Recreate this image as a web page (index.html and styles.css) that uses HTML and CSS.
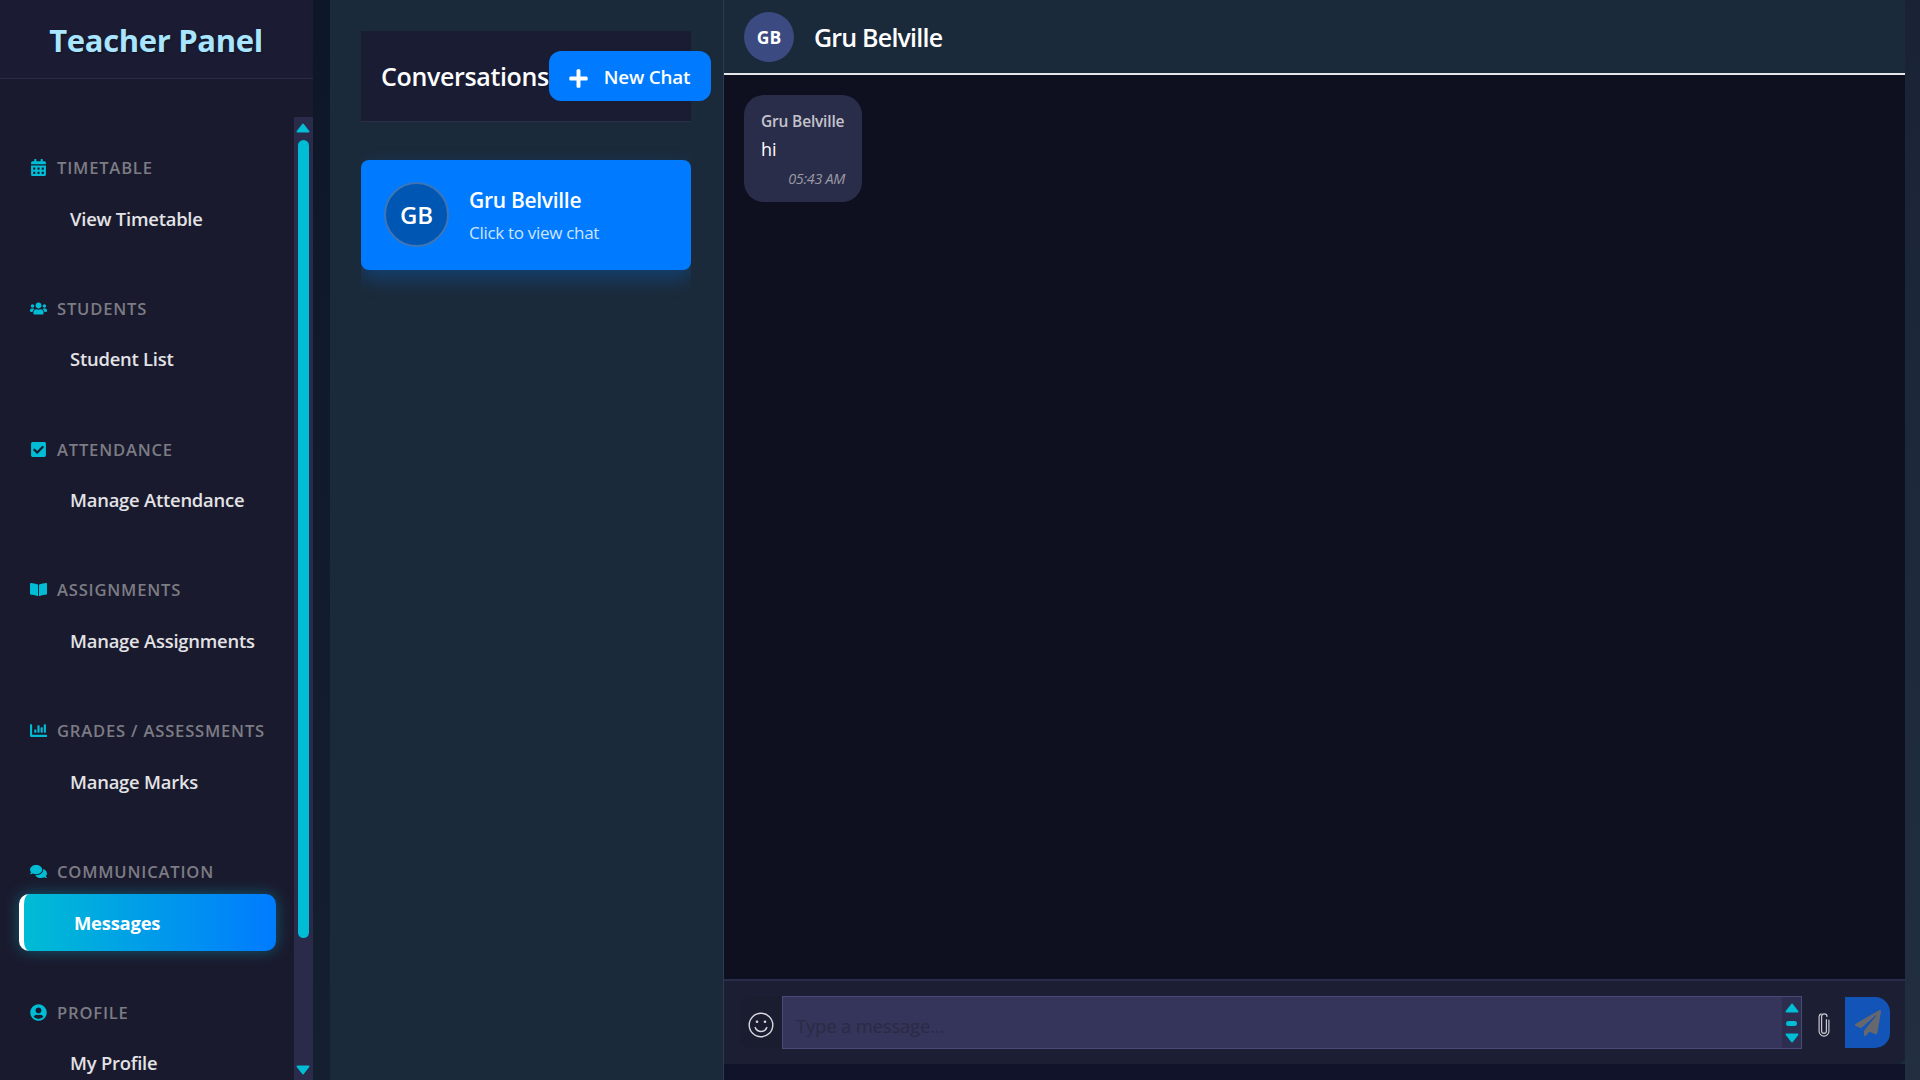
FILE: index.html
```html
<!DOCTYPE html>
<html lang="en">
<head>
    <meta charset="UTF-8">
    <meta name="viewport" content="width=device-width, initial-scale=1.0">
    <title>Teacher Panel - Messages</title>
    <link rel="stylesheet" href="styles.css">
</head>
<body>

<aside class="sidebar">
    <div class="sidebar-header">
        <h1 class="sidebar-title">Teacher Panel</h1>
    </div>
    <div class="sidebar-body">
        <nav class="nav">
            <section class="nav-section">
                <h2 class="nav-heading">
                    <svg class="nav-icon" viewBox="0 0 448 512"><path d="M0 464c0 26.5 21.5 48 48 48h352c26.5 0 48-21.5 48-48V192H0v272zm320-196c0-6.6 5.4-12 12-12h40c6.6 0 12 5.4 12 12v40c0 6.6-5.4 12-12 12h-40c-6.6 0-12-5.4-12-12v-40zm0 128c0-6.6 5.4-12 12-12h40c6.6 0 12 5.4 12 12v40c0 6.6-5.4 12-12 12h-40c-6.6 0-12-5.4-12-12v-40zM192 268c0-6.6 5.4-12 12-12h40c6.6 0 12 5.4 12 12v40c0 6.6-5.4 12-12 12h-40c-6.6 0-12-5.4-12-12v-40zm0 128c0-6.6 5.4-12 12-12h40c6.6 0 12 5.4 12 12v40c0 6.6-5.4 12-12 12h-40c-6.6 0-12-5.4-12-12v-40zM64 268c0-6.6 5.4-12 12-12h40c6.6 0 12 5.4 12 12v40c0 6.6-5.4 12-12 12H76c-6.6 0-12-5.4-12-12v-40zm0 128c0-6.6 5.4-12 12-12h40c6.6 0 12 5.4 12 12v40c0 6.6-5.4 12-12 12H76c-6.6 0-12-5.4-12-12v-40zM400 64h-48V16c0-8.8-7.2-16-16-16h-32c-8.8 0-16 7.2-16 16v48H160V16c0-8.8-7.2-16-16-16h-32c-8.8 0-16 7.2-16 16v48H48C21.5 64 0 85.5 0 112v48h448v-48c0-26.5-21.5-48-48-48z"/></svg>
                    Timetable
                </h2>
                <a class="nav-link">View Timetable</a>
            </section>
            <section class="nav-section">
                <h2 class="nav-heading">
                    <svg class="nav-icon" viewBox="0 0 640 512"><path d="M96 224c35.3 0 64-28.7 64-64s-28.7-64-64-64-64 28.7-64 64 28.7 64 64 64zm448 0c35.3 0 64-28.7 64-64s-28.7-64-64-64-64 28.7-64 64 28.7 64 64 64zm32 32h-64c-17.6 0-33.5 7.1-45.1 18.6 40.3 22.1 68.9 62 75.1 109.4h66c17.7 0 32-14.3 32-32v-32c0-35.3-28.7-64-64-64zm-256 0c61.9 0 112-50.1 112-112S381.9 32 320 32 208 82.1 208 144s50.1 112 112 112zm76.8 32h-8.3c-20.8 10-43.9 16-68.5 16s-47.6-6-68.5-16h-8.3C179.6 288 128 339.6 128 403.2V432c0 26.5 21.5 48 48 48h288c26.5 0 48-21.5 48-48v-28.8c0-63.6-51.6-115.2-115.2-115.2zm-223.7-13.4C161.5 263.1 145.6 256 128 256H64c-35.3 0-64 28.7-64 64v32c0 17.7 14.3 32 32 32h65.9c6.3-47.4 34.9-87.3 75.2-109.4z"/></svg>
                    Students
                </h2>
                <a class="nav-link">Student List</a>
            </section>
            <section class="nav-section">
                <h2 class="nav-heading">
                    <svg class="nav-icon" viewBox="0 0 448 512"><path d="M400 480H48c-26.51 0-48-21.49-48-48V80c0-26.51 21.49-48 48-48h352c26.51 0 48 21.49 48 48v352c0 26.51-21.49 48-48 48zm-204.686-98.059l184-184c6.248-6.248 6.248-16.379 0-22.627l-22.627-22.627c-6.248-6.248-16.379-6.249-22.628 0L184 302.745l-70.059-70.059c-6.248-6.248-16.379-6.248-22.628 0l-22.627 22.627c-6.248 6.248-6.248 16.379 0 22.627l104 104c6.249 6.25 16.379 6.25 22.628.001z"/></svg>
                    Attendance
                </h2>
                <a class="nav-link">Manage Attendance</a>
            </section>
            <section class="nav-section">
                <h2 class="nav-heading">
                    <svg class="nav-icon" viewBox="0 0 576 512"><path d="M542.22 32.05c-54.8 3.11-163.72 14.43-230.96 55.59-4.64 2.84-7.27 7.89-7.27 13.17v363.87c0 11.55 12.63 18.85 23.28 13.49 69.18-34.82 169.23-44.32 218.7-46.92 16.89-.89 30.02-14.43 30.02-30.66V62.75c.01-17.71-15.35-31.74-33.77-30.7zM264.73 87.64C197.5 46.48 88.58 35.17 33.78 32.05 15.36 31.01 0 45.04 0 62.75V400.6c0 16.24 13.13 29.78 30.02 30.66 49.49 2.6 149.59 12.11 218.77 46.95 10.62 5.35 23.21-1.94 23.21-13.46V100.63c0-5.29-2.62-10.14-7.27-12.99z"/></svg>
                    Assignments
                </h2>
                <a class="nav-link">Manage Assignments</a>
            </section>
            <section class="nav-section">
                <h2 class="nav-heading">
                    <svg class="nav-icon" viewBox="0 0 512 512"><path d="M332.8 320h38.4c6.4 0 12.8-6.4 12.8-12.8V172.8c0-6.4-6.4-12.8-12.8-12.8h-38.4c-6.4 0-12.8 6.4-12.8 12.8v134.4c0 6.4 6.4 12.8 12.8 12.8zm96 0h38.4c6.4 0 12.8-6.4 12.8-12.8V76.8c0-6.4-6.4-12.8-12.8-12.8h-38.4c-6.4 0-12.8 6.4-12.8 12.8v230.4c0 6.4 6.4 12.8 12.8 12.8zm-288 0h38.4c6.4 0 12.8-6.4 12.8-12.8v-70.4c0-6.4-6.4-12.8-12.8-12.8h-38.4c-6.4 0-12.8 6.4-12.8 12.8v70.4c0 6.4 6.4 12.8 12.8 12.8zm96 0h38.4c6.4 0 12.8-6.4 12.8-12.8V108.8c0-6.4-6.4-12.8-12.8-12.8h-38.4c-6.4 0-12.8 6.4-12.8 12.8v198.4c0 6.4 6.4 12.8 12.8 12.8zM496 384H64V80c0-8.84-7.16-16-16-16H16C7.16 64 0 71.16 0 80v336c0 17.67 14.33 32 32 32h464c8.84 0 16-7.16 16-16v-32c0-8.84-7.16-16-16-16z"/></svg>
                    Grades / Assessments
                </h2>
                <a class="nav-link">Manage Marks</a>
            </section>
            <section class="nav-section">
                <h2 class="nav-heading">
                    <svg class="nav-icon" viewBox="0 0 576 512"><path d="M416 192c0-88.4-93.1-160-208-160S0 103.6 0 192c0 34.3 14.1 65.9 38 92-13.4 30.2-35.5 54.2-35.8 54.5-2.2 2.3-2.8 5.7-1.5 8.7S4.8 352 8 352c36.6 0 66.9-12.3 88.7-25 32.2 15.7 70.3 25 111.3 25 114.9 0 208-71.6 208-160zm122 220c23.9-26 38-57.7 38-92 0-66.9-53.5-124.2-129.3-148.1.9 6.6 1.3 13.3 1.3 20.1 0 105.9-107.7 192-240 192-10.8 0-21.3-.8-31.7-1.9C207.8 439.6 281.8 480 368 480c41 0 79.1-9.2 111.3-25 21.8 12.7 52.1 25 88.7 25 3.2 0 6.1-1.9 7.3-4.8 1.3-2.9.7-6.3-1.5-8.7-.3-.3-22.4-24.2-35.8-54.5z"/></svg>
                    Communication
                </h2>
                <a class="nav-link active">Messages</a>
            </section>
            <section class="nav-section">
                <h2 class="nav-heading">
                    <svg class="nav-icon" viewBox="0 0 496 512"><path d="M248 8C111 8 0 119 0 256s111 248 248 248 248-111 248-248S385 8 248 8zm0 96c48.6 0 88 39.4 88 88s-39.4 88-88 88-88-39.4-88-88 39.4-88 88-88zm0 344c-58.7 0-111.3-26.6-146.5-68.2 18.8-35.4 55.6-59.8 98.5-59.8 2.4 0 4.8.4 7.1 1.1 13 4.2 26.6 6.9 40.9 6.9 14.3 0 28-2.7 40.9-6.9 2.3-.7 4.7-1.1 7.1-1.1 42.9 0 79.7 24.4 98.5 59.8C359.3 421.4 306.7 448 248 448z"/></svg>
                    Profile
                </h2>
                <a class="nav-link">My Profile</a>
            </section>
        </nav>
        <div class="fake-scroll">
            <svg class="arrow" viewBox="0 0 14 10"><path d="M7 1.5L12.5 8.5H1.5Z"/></svg>
            <span class="fake-thumb"></span>
            <svg class="arrow" viewBox="0 0 14 10"><path d="M7 8.5L12.5 1.5H1.5Z"/></svg>
        </div>
    </div>
</aside>

<div class="gutter"></div>

<section class="convo-panel">
    <div class="convo-header">
        <h2 class="convo-title">Conversations</h2>
        <button class="new-chat" type="button">
            <svg class="plus-icon" viewBox="0 0 448 512"><path d="M416 208H272V64c0-17.67-14.33-32-32-32h-32c-17.67 0-32 14.33-32 32v144H32c-17.67 0-32 14.33-32 32v32c0 17.67 14.33 32 32 32h144v144c0 17.67 14.33 32 32 32h32c17.67 0 32-14.33 32-32V304h144c17.67 0 32-14.33 32-32v-32c0-17.67-14.33-32-32-32z"/></svg>
            New Chat
        </button>
    </div>
    <div class="convo-list">
        <div class="convo-card">
            <div class="convo-avatar">GB</div>
            <div class="convo-info">
                <div class="convo-name">Gru Belville</div>
                <div class="convo-sub">Click to view chat</div>
            </div>
        </div>
    </div>
</section>

<main class="chat">
    <header class="chat-header">
        <div class="chat-avatar">GB</div>
        <div class="chat-name">Gru Belville</div>
    </header>
    <div class="chat-messages">
        <div class="bubble">
            <div class="bubble-sender">Gru Belville</div>
            <div class="bubble-text">hi</div>
            <div class="bubble-time">05:43 AM</div>
        </div>
    </div>
    <form class="chat-input">
        <button class="emoji-btn" type="button">
            <svg class="emoji-icon" viewBox="0 0 26 26" fill="none" stroke="currentColor" stroke-width="1.4" stroke-linecap="round">
                <circle cx="13" cy="13" r="11.8"/>
                <path d="M7.2 15.6c1.2 2.6 3.3 3.9 5.8 3.9s4.6-1.3 5.8-3.9"/>
                <circle cx="9" cy="9.8" r="1.3" fill="currentColor" stroke="none"/>
                <circle cx="17" cy="9.8" r="1.3" fill="currentColor" stroke="none"/>
            </svg>
        </button>
        <div class="input-box">
            <input class="message-input" type="text" placeholder="Type a message...">
            <div class="input-scroll">
                <svg class="arrow" viewBox="0 0 14 10"><path d="M7 1.5L12.5 8.5H1.5Z"/></svg>
                <span class="input-thumb"></span>
                <svg class="arrow" viewBox="0 0 14 10"><path d="M7 8.5L12.5 1.5H1.5Z"/></svg>
            </div>
        </div>
        <button class="attach-btn" type="button">
            <svg class="clip-icon" viewBox="0 0 12 24" fill="none" stroke="currentColor" stroke-width="1.2" stroke-linecap="round">
                <path d="M8.4 6.5v11.4a2.4 2.4 0 0 1-4.8 0V3.6a2.7 2.7 0 0 1 5.4 0"/>
                <path d="M10.9 7v11.2a4.9 4.9 0 0 1-9.8 0V3.8a3.2 3.2 0 0 1 2-2.9"/>
            </svg>
        </button>
        <button class="send-btn" type="button">
            <svg class="send-icon" viewBox="0 0 512 512"><path d="M476 3.2L12.5 270.6c-18.1 10.4-15.8 35.6 2.2 43.2L121 358.4l287.3-253.2c5.5-4.9 13.3 2.6 8.6 8.3L176 407v80.5c0 23.6 28.5 32.9 42.5 15.8L282 426l124.6 52.2c14.2 6 30.4-2.9 33-18.2l72-432C515 7.8 493.3-6.8 476 3.2z"/></svg>
        </button>
    </form>
    <div class="chat-foot"></div>
</main>

<div class="edge"></div>

</body>
</html>
```

FILE: styles.css
```css
* {
    box-sizing: border-box;
}

body {
    font-family: 'Open Sans', 'Noto Sans', sans-serif;
    background-color: #1b2a3a;
    color: #fff;
    margin: 0;
    padding: 0;
    display: flex;
    height: 100vh;
    overflow: hidden;
}

/* sidebar */
.sidebar {
    width: 313px;
    flex-shrink: 0;
    background-color: #1a1a2e;
    display: flex;
    flex-direction: column;
    height: 100%;
}

.sidebar-header {
    height: 79px;
    flex-shrink: 0;
    padding-right: 1px;
    display: flex;
    align-items: center;
    justify-content: center;
    background-color: #1b1c33;
    border-bottom: 1px solid #2b2c44;
}

.sidebar-title {
    margin: 2px 0 0;
    font-size: 31px;
    font-weight: 700;
    letter-spacing: -0.35px;
    color: #a9e5ff;
    text-shadow: 1px 1px 2px rgba(0, 0, 0, 0.4);
}

.sidebar-body {
    flex: 1;
    min-height: 0;
    display: flex;
    padding-top: 38px;
}

.nav {
    flex: 1;
    padding: 35.6px 18px 0 19px;
    overflow: hidden;
}

.nav-section {
    height: 140.8px;
}

.nav-heading {
    margin: 0 0 7.2px;
    height: 30px;
    padding-left: 11px;
    display: flex;
    align-items: center;
    font-size: 16.6px;
    font-weight: 600;
    letter-spacing: 0.8px;
    text-transform: uppercase;
    color: #7c7c84;
}

.nav-icon {
    width: 17px;
    height: 17px;
    margin-right: 10px;
    flex-shrink: 0;
    fill: #00bcd4;
}

.nav-link {
    display: flex;
    align-items: center;
    height: 56.8px;
    padding-left: 51px;
    font-size: 18.4px;
    font-weight: 600;
    letter-spacing: -0.22px;
    color: #e3e3e6;
    border-radius: 10px;
}

.nav-link.active {
    padding-left: 50px;
    color: #fff;
    font-weight: 700;
    border-left: 5px solid #fff;
    background: linear-gradient(90deg, #00bcd4, #007bff);
    box-shadow: 0 0 15px rgba(0, 188, 212, 0.4);
}

.fake-scroll {
    width: 19px;
    flex-shrink: 0;
    background-color: #2a2a4a;
    display: flex;
    flex-direction: column;
    align-items: center;
    padding: 6px 1px 5px 0;
}

.fake-thumb {
    flex: 1;
    width: 11px;
    margin: 7px 0 127px;
    border-radius: 6px;
    background-color: #00bcd4;
}

.arrow {
    width: 14px;
    height: 10px;
    flex-shrink: 0;
    fill: #00bcd4;
    stroke: #00bcd4;
    stroke-width: 2;
    stroke-linejoin: round;
}

.gutter {
    width: 17px;
    flex-shrink: 0;
    background: linear-gradient(180deg, #0e1727, #141f30);
}

/* conversation list */
.convo-panel {
    width: 393px;
    flex-shrink: 0;
    padding: 31px 32px 0 31px;
    display: flex;
    flex-direction: column;
}

.convo-header {
    height: 91px;
    flex-shrink: 0;
    padding-left: 20px;
    display: flex;
    align-items: center;
    background-color: #1a1c33;
    border-bottom: 1px solid #2b2e48;
}

.convo-title {
    margin: 0;
    font-size: 25px;
    font-weight: 600;
    letter-spacing: -0.35px;
    white-space: nowrap;
}

.new-chat {
    flex-shrink: 0;
    width: 162px;
    height: 50px;
    padding: 2px 0 0 20px;
    display: flex;
    align-items: center;
    font-family: inherit;
    font-size: 18.8px;
    font-weight: 600;
    letter-spacing: -0.2px;
    color: #fff;
    background-color: #007bff;
    border: none;
    border-radius: 12px;
}

.plus-icon {
    width: 19px;
    height: 21px;
    margin: 2px 16px 0 0;
    fill: #fff;
}

.convo-list {
    flex: 1;
    padding-top: 38px;
    overflow: hidden;
}

.convo-card {
    height: 110px;
    padding-left: 23px;
    display: flex;
    align-items: center;
    background-color: #007bff;
    border-radius: 8px;
    box-shadow: 0 8px 20px rgba(0, 123, 255, 0.3);
}

.convo-avatar {
    width: 65px;
    height: 65px;
    margin: -1px 20px 0 0;
    flex-shrink: 0;
    display: flex;
    align-items: center;
    justify-content: center;
    font-size: 24px;
    font-weight: 600;
    background-color: #0056b3;
    border: 2px solid #3d76b8;
    border-radius: 50%;
}

.convo-name {
    font-size: 21px;
    font-weight: 600;
    letter-spacing: -0.3px;
    margin: -1px 0 7px;
}

.convo-sub {
    font-size: 17px;
    letter-spacing: -0.3px;
    color: #cfe4ff;
}

/* chat */
.chat {
    flex: 1;
    min-width: 0;
    display: flex;
    flex-direction: column;
    border-left: 1px solid #2a3c50;
}

.chat-header {
    height: 75px;
    flex-shrink: 0;
    padding-left: 20px;
    display: flex;
    align-items: center;
    background-color: #1b2a3a;
    border-bottom: 2px solid #e4e6ea;
}

.chat-avatar {
    width: 50px;
    height: 50px;
    margin-right: 20px;
    display: flex;
    align-items: center;
    justify-content: center;
    font-size: 17.5px;
    font-weight: 700;
    background-color: #3b4a80;
    border-radius: 50%;
}

.chat-name {
    font-size: 25px;
    font-weight: 600;
    letter-spacing: -0.8px;
}

.chat-messages {
    flex: 1;
    padding: 20px;
    background-color: #0e101f;
}

.bubble {
    width: 118px;
    height: 107px;
    padding: 17px 17px 0 17px;
    background-color: #2a2d4a;
    border-radius: 20px;
}

.bubble-sender {
    font-size: 15.5px;
    font-weight: 600;
    letter-spacing: -0.18px;
    line-height: 18px;
    white-space: nowrap;
    color: #c4c4cc;
}

.bubble-text {
    font-size: 18px;
    line-height: 24px;
    margin-top: 7px;
}

.bubble-time {
    font-size: 14.4px;
    font-style: italic;
    letter-spacing: -0.3px;
    line-height: 18px;
    margin-top: 9px;
    text-align: right;
    white-space: nowrap;
    color: #9a9aa4;
}

.chat-input {
    height: 85px;
    flex-shrink: 0;
    padding: 15px 15px 0 16px;
    display: flex;
    align-items: flex-start;
    background-color: #1c1e33;
    border-top: 2px solid #2a2d4a;
    border-bottom-right-radius: 8px;
}

.emoji-btn {
    width: 42px;
    height: 52px;
    padding: 6px 0 0;
    flex-shrink: 0;
    display: flex;
    align-items: center;
    justify-content: center;
    color: #d8d8de;
    background-color: #1a1c30;
    border: none;
    border-radius: 12px 0 0 12px;
}

.emoji-icon {
    width: 26px;
    height: 26px;
}

.input-box {
    flex: 1;
    height: 53px;
    display: flex;
    background-color: #35345a;
    border: 1px solid #4a4a78;
}

.message-input {
    flex: 1;
    min-width: 0;
    padding: 6px 13px 0;
    font-family: inherit;
    font-size: 18.4px;
    letter-spacing: -0.14px;
    color: #fff;
    background: transparent;
    border: none;
    outline: none;
}

.message-input::placeholder {
    color: #2a2b44;
}

.input-scroll {
    width: 19px;
    flex-shrink: 0;
    display: flex;
    flex-direction: column;
    align-items: center;
    justify-content: space-between;
    padding: 6px 0 5px;
    background-color: #2d2d50;
}

.input-thumb {
    width: 11px;
    height: 5px;
    border-radius: 3px;
    background-color: #00bcd4;
}

.attach-btn {
    width: 43px;
    height: 53px;
    padding: 4px 0 0;
    flex-shrink: 0;
    display: flex;
    align-items: center;
    justify-content: center;
    color: #c8c8d0;
    background: none;
    border: none;
}

.clip-icon {
    width: 12px;
    height: 24px;
}

.send-btn {
    width: 45px;
    height: 51px;
    margin-top: 1px;
    padding: 0;
    flex-shrink: 0;
    display: flex;
    align-items: center;
    justify-content: center;
    background-color: #1254b8;
    border: none;
    border-radius: 0 15px 15px 0;
}

.send-icon {
    width: 26px;
    height: 26px;
    fill: #66686e;
}

.chat-foot {
    height: 16px;
    flex-shrink: 0;
    background-color: #11132b;
}

.edge {
    width: 15px;
    flex-shrink: 0;
    background: linear-gradient(180deg, #1a2336, #212f40);
}
```
